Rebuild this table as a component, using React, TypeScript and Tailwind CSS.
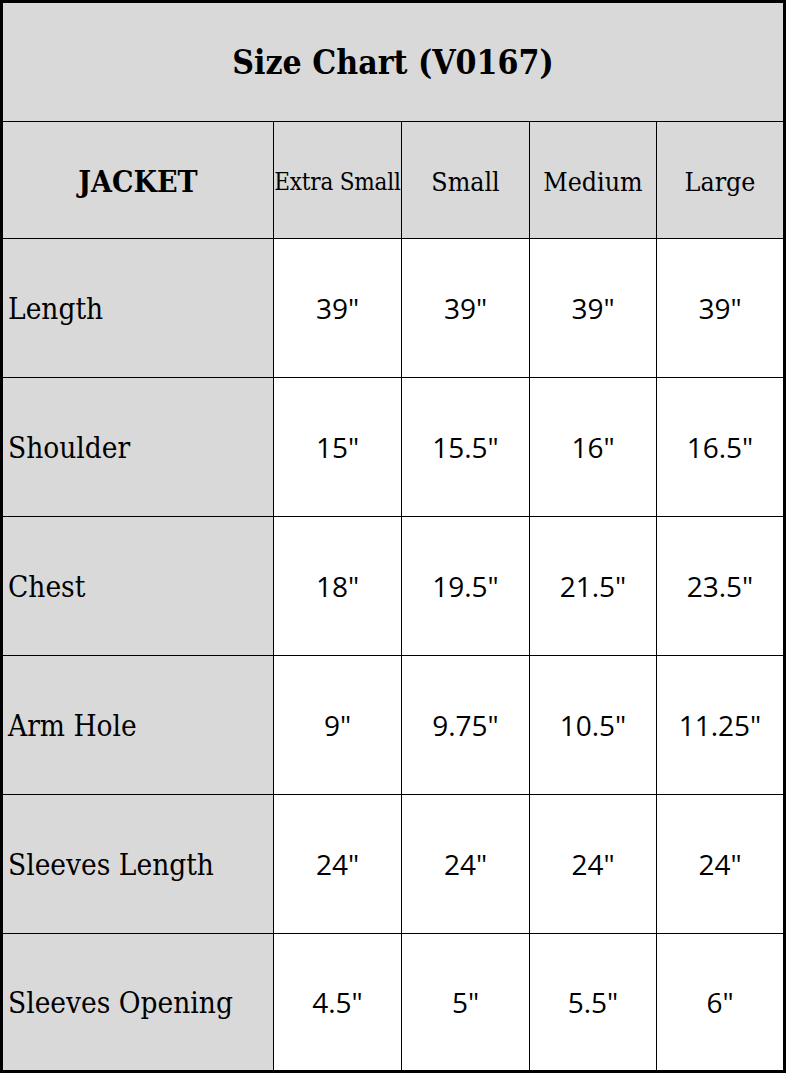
import React from "react";

const sizes = ["Extra Small", "Small", "Medium", "Large"];

const rows = [
  { label: "Length", values: ['39"', '39"', '39"', '39"'] },
  { label: "Shoulder", values: ['15"', '15.5"', '16"', '16.5"'] },
  { label: "Chest", values: ['18"', '19.5"', '21.5"', '23.5"'] },
  { label: "Arm Hole", values: ['9"', '9.75"', '10.5"', '11.25"'] },
  { label: "Sleeves Length", values: ['24"', '24"', '24"', '24"'] },
  { label: "Sleeves Opening", values: ['4.5"', '5"', '5.5"', '6"'] },
];

const colW = ["w-[128px]", "w-[128px]", "w-[127px]", "flex-1"];

const serif = "font-['DejaVu_Serif_Condensed','DejaVu_Serif',serif]";
const sans = "font-['Open_Sans',sans-serif]";

export default function App() {
  return (
    <div className="w-[786px] h-[1073px] bg-white border-[3px] border-black flex flex-col text-black">
      {/* title */}
      <div className={`h-[118px] shrink-0 bg-[#d9d9d9] flex items-center justify-center pt-[2px] ${serif} font-bold text-[33.5px]`}>
        Size Chart (V0167)
      </div>

      {/* header */}
      <div className="h-[117px] shrink-0 flex border-t border-black bg-[#d9d9d9]">
        <div className={`w-[270px] shrink-0 flex items-center justify-center pt-[2px] ${serif} font-bold text-[30px]`}>
          JACKET
        </div>
        {sizes.map((s, i) => (
          <div
            key={s}
            className={`${colW[i]} shrink-0 border-l border-black flex items-center justify-center pt-[3px] whitespace-nowrap ${serif} ${
              i === 0 ? "text-[24px] tracking-[-0.2px]" : "text-[26.5px]"
            }`}
          >
            {s}
          </div>
        ))}
      </div>

      {/* body */}
      {rows.map((r, ri) => (
        <div
          key={r.label}
          className={`${ri === rows.length - 1 ? "flex-1" : "h-[139px] shrink-0"} flex border-t border-black`}
        >
          <div className={`w-[270px] shrink-0 bg-[#d9d9d9] flex items-center pl-[5px] pt-[3px] whitespace-nowrap ${serif} text-[29.5px]`}>
            {r.label}
          </div>
          {r.values.map((v, i) => (
            <div
              key={i}
              className={`${colW[i]} shrink-0 border-l border-black flex items-center justify-center ${sans} text-[28px]`}
            >
              {v}
            </div>
          ))}
        </div>
      ))}
    </div>
  );
}
